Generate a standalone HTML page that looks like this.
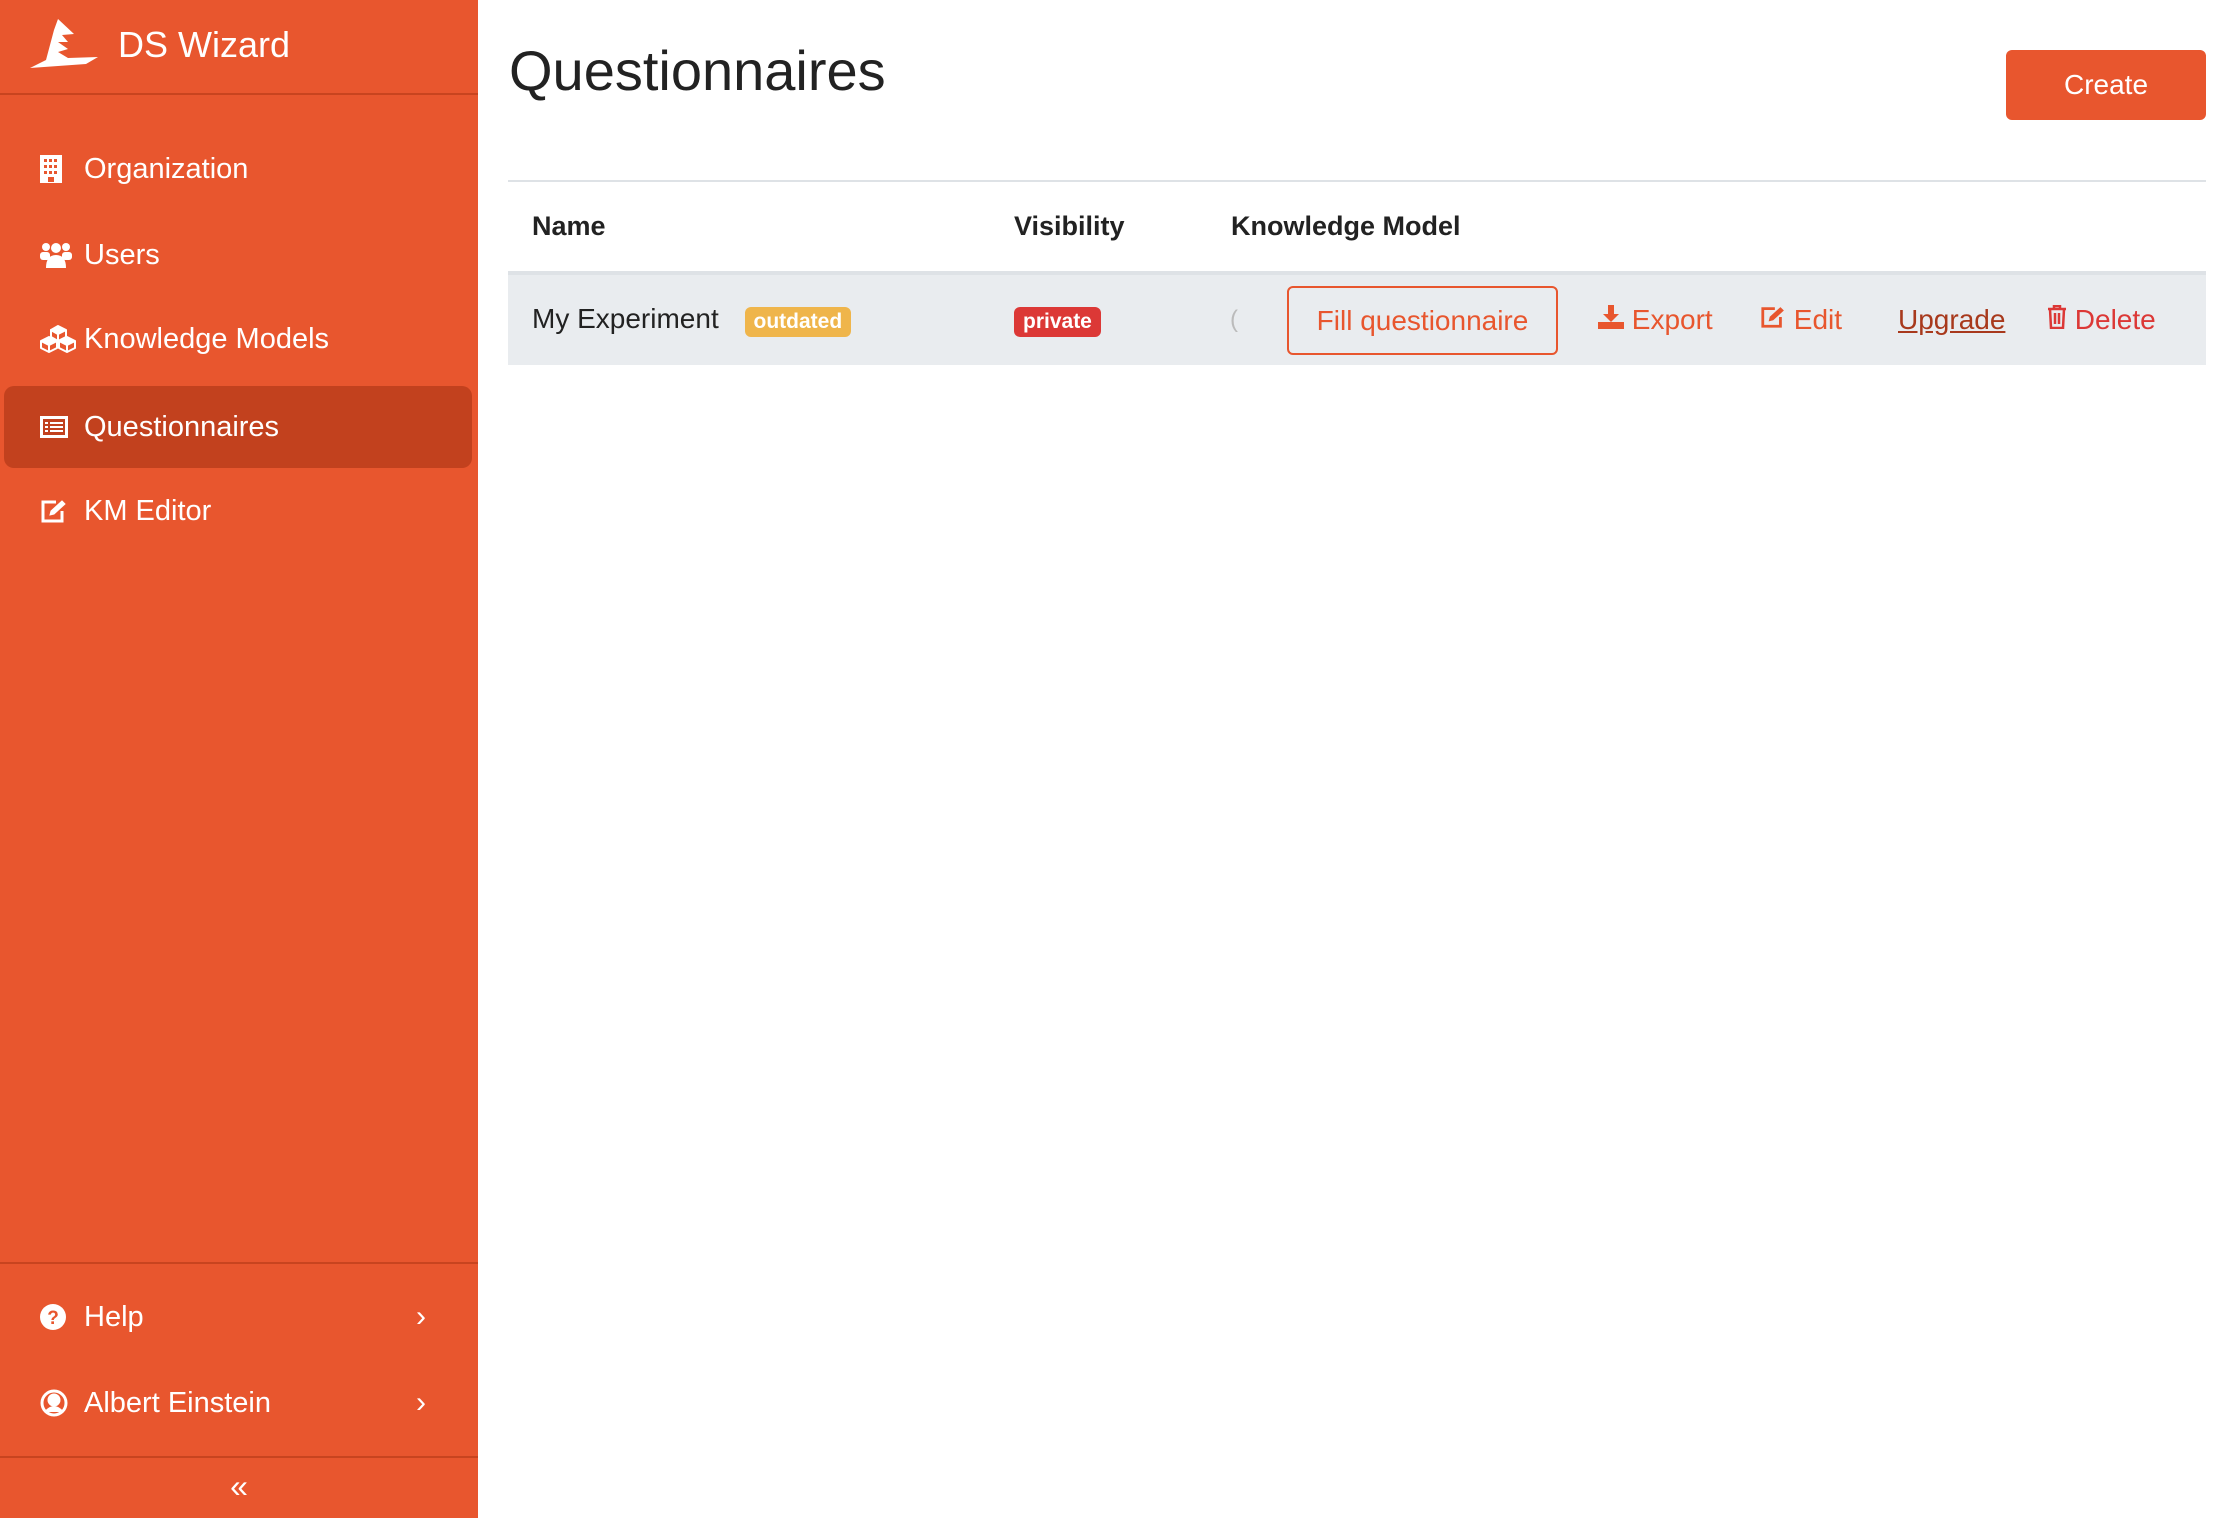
<!DOCTYPE html>
<html><head><meta charset="utf-8"><style>
*{box-sizing:border-box;margin:0;padding:0}
body{width:2234px;height:1518px;font-family:"Liberation Sans",sans-serif;background:#fff;position:relative;overflow:hidden;color:#333}
.sb{position:absolute;left:0;top:0;width:478px;height:1518px;background:#e8562e;color:#fff}
.logo{position:absolute;left:28px;top:16px}
.brand{position:absolute;left:118px;top:24px;font-size:36px}
.hr{position:absolute;left:0;width:478px;height:2px;background:#c8441f}
.nav{position:absolute;left:4px;width:468px;height:80px;border-radius:10px;font-size:29px;display:flex;align-items:center}
.nav.act{background:#c2411e}
.nav svg{position:absolute;left:36px}
.nav span{position:absolute;left:80px}
.chev{position:absolute;right:46px;font-size:30px}
h1{position:absolute;left:509px;top:38px;font-size:56px;font-weight:normal;color:#222}
.create{position:absolute;left:2006px;top:50px;width:200px;height:70px;background:#e8562e;border-radius:6px;color:#fff;font-size:28px;display:flex;align-items:center;justify-content:center}
.tline{position:absolute;left:508px;width:1698px}
.th{position:absolute;top:211px;font-size:27px;font-weight:bold;color:#222}
.row{position:absolute;left:508px;top:275px;width:1698px;height:90px;background:#e9ecef}
.c{position:absolute;top:320px;transform:translateY(-50%);font-size:28px;white-space:nowrap}
.badge{display:inline-block;padding:3px 9px;border-radius:6px;color:#fff;font-size:21px;font-weight:bold}
.fill{position:absolute;left:1287px;top:286px;width:271px;height:69px;border:2px solid #e8562e;border-radius:6px;color:#e8562e;font-size:28px;display:flex;align-items:center;justify-content:center}
</style></head><body>
<div class="sb">
<svg class="logo" width="72" height="56" viewBox="0 0 72 56"><path d="M2 52 L18 44 L26 14 L30 3 L46 18 L34 19 L40 26 L30 26 L40 33 L30 36 L40 42 L70 41 L58 48 Z" fill="#fff"/></svg>
<div class="brand">DS Wizard</div>
<div class="hr" style="top:93px"></div>
<div class="nav" style="top:129px"><svg width="22" height="28" viewBox="0 0 22 28"><rect x="0" y="0" width="22" height="28" fill="#fff"/><g fill="#e8562e"><rect x="4" y="4" width="3" height="3"/><rect x="9" y="4" width="3" height="3"/><rect x="14" y="4" width="3" height="3"/><rect x="4" y="10" width="3" height="3"/><rect x="9" y="10" width="3" height="3"/><rect x="14" y="10" width="3" height="3"/><rect x="4" y="16" width="3" height="3"/><rect x="9" y="16" width="3" height="3"/><rect x="14" y="16" width="3" height="3"/><rect x="8" y="22" width="6" height="5"/></g></svg><span>Organization</span></div>
<div class="nav" style="top:215px"><svg width="32" height="28" viewBox="0 0 32 28" fill="#fff"><circle cx="6" cy="6" r="4"/><circle cx="26" cy="6" r="4"/><circle cx="16" cy="7" r="5"/><rect x="0" y="11" width="10" height="8" rx="3"/><rect x="22" y="11" width="10" height="8" rx="3"/><path d="M6 27 Q6 14 16 14 Q26 14 26 27Z"/></svg><span>Users</span></div>
<div class="nav" style="top:299px"><svg width="36" height="28" viewBox="0 0 36 28" fill="#fff" stroke="#fff" stroke-width="2" stroke-linejoin="round"><path d="M11 5 L18 1 L26 5 L18 9Z"/><path d="M11 5 V12 L18 16 V9Z" fill="none"/><path d="M26 5 V12 L18 16" fill="none"/><path d="M1 16 L9 12 L17 16 L9 20Z"/><path d="M1 16 V23 L9 27 L17 23 V16" fill="none"/><path d="M9 20 V27"/><path d="M19 16 L27 12 L35 16 L27 20Z"/><path d="M19 16 V23 L27 27 L35 23 V16" fill="none"/><path d="M27 20 V27"/></svg><span>Knowledge Models</span></div>
<div class="nav act" style="top:386px;height:82px"><svg width="28" height="22" viewBox="0 0 28 22"><rect x="1.5" y="1.5" width="25" height="19" fill="none" stroke="#fff" stroke-width="3"/><g fill="#fff"><rect x="5" y="6" width="3" height="2"/><rect x="10" y="6" width="13" height="2"/><rect x="5" y="10" width="3" height="2"/><rect x="10" y="10" width="13" height="2"/><rect x="5" y="14" width="3" height="2"/><rect x="10" y="14" width="13" height="2"/></g></svg><span>Questionnaires</span></div>
<div class="nav" style="top:471px"><svg width="28" height="24" viewBox="0 0 28 24" fill="none" stroke="#fff" stroke-width="3"><path d="M16 3 H3 V22 H22 V12"/><path d="M10 16 L11 12 L22 2 L25 5 L14 15 Z" fill="#fff" stroke-width="1"/></svg><span>KM Editor</span></div>
<div class="hr" style="top:1262px"></div>
<div class="nav" style="top:1277px"><svg width="26" height="26" viewBox="0 0 26 26"><circle cx="13" cy="13" r="13" fill="#fff"/><text x="13" y="20" font-size="19" font-weight="bold" text-anchor="middle" fill="#e8562e" font-family="Liberation Sans">?</text></svg><span>Help</span><div class="chev">›</div></div>
<div class="nav" style="top:1363px"><svg width="28" height="28" viewBox="0 0 28 28" fill="none" stroke="#fff" stroke-width="3"><circle cx="14" cy="14" r="12"/><circle cx="14" cy="11" r="5" fill="#fff"/><path d="M6 23 Q14 14 22 23" fill="#fff"/></svg><span>Albert Einstein</span><div class="chev">›</div></div>
<div class="hr" style="top:1456px"></div>
<div style="position:absolute;left:0;width:478px;top:1468px;text-align:center;font-size:32px">«</div>
</div>
<h1>Questionnaires</h1>
<div class="create">Create</div>
<div class="tline" style="top:180px;height:2px;background:#dee2e6"></div>
<div class="th" style="left:532px">Name</div>
<div class="th" style="left:1014px">Visibility</div>
<div class="th" style="left:1231px">Knowledge Model</div>
<div class="row"></div>
<div class="tline" style="top:271px;height:4px;background:#dee2e6"></div>
<div class="c" style="left:532px;color:#222">My Experiment <span class="badge" style="background:#efb54b;margin-left:18px">outdated</span></div>
<div class="c" style="left:1014px"><span class="badge" style="background:#dc3836">private</span></div>
<div class="c" style="left:1230px;color:#bbb;font-size:24px">(</div>
<div class="fill">Fill questionnaire</div>
<div class="c" style="left:1598px;color:#e8562e"><svg width="26" height="24" viewBox="0 0 26 24" fill="#e8562e"><path d="M10 0h6v9h5l-8 8-8-8h5z"/><rect x="0" y="17" width="26" height="7"/></svg> Export</div>
<div class="c" style="left:1760px;color:#e8562e"><svg width="26" height="24" viewBox="0 0 28 24" fill="none" stroke="#e8562e" stroke-width="3"><path d="M16 3 H3 V22 H22 V12"/><path d="M10 16 L11 12 L22 2 L25 5 L14 15 Z" fill="#e8562e" stroke-width="1"/></svg> Edit</div>
<div class="c" style="left:1898px;color:#a8391c;text-decoration:underline">Upgrade</div>
<div class="c" style="left:2047px;color:#dc3836"><svg width="20" height="24" viewBox="0 0 20 24" fill="none" stroke="#dc3836" stroke-width="2.5"><path d="M1 4h18M7 4V1h6v3M3 4l1 19h12l1-19M8 8v11M12 8v11"/></svg> Delete</div>
</body></html>
